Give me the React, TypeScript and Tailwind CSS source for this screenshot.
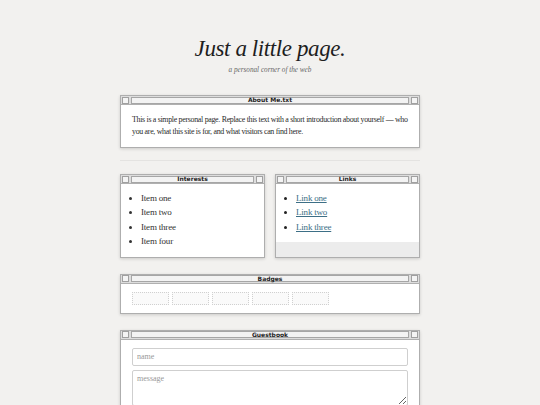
import type { ReactNode } from 'react'

const serif = { fontFamily: '"Liberation Serif", "DejaVu Serif", serif' }

function Win({ title, children, className = '' }: { title: string; children: ReactNode; className?: string }) {
  return (
    <div className={`flex flex-col border border-[#aeaeae] bg-[#ececec] shadow-[0_1px_3px_rgba(0,0,0,0.16)] ${className}`}>
      <div className="flex h-[9px] items-center gap-[2px] border-b border-[#b0b0b0] bg-[#dddddd] px-[1px]">
        <div className="h-[7px] w-[7px] border border-[#a0a0a0] bg-[#f4f4f4]" />
        <div className="flex h-[7px] flex-1 items-center justify-center border border-[#a6a6a6] bg-[#f3f3f3]">
          <span className="text-[6px] leading-none font-bold text-[#222]" style={{ fontFamily: '"DejaVu Sans", sans-serif' }}>
            {title}
          </span>
        </div>
        <div className="h-[7px] w-[7px] border border-[#a0a0a0] bg-[#f4f4f4]" />
      </div>
      <div className="bg-white">{children}</div>
    </div>
  )
}

export default function App() {
  return (
    <div className="min-h-[405px] bg-[#f2f1ef] text-[#222]" style={serif}>
      <div className="mx-auto w-[300px] pt-[35px]">
        <header className="text-center">
          <h1 className="text-[23px] leading-[28px] tracking-[-0.4px] italic text-[#1e1e1e]">Just a little page.</h1>
          <p className="mt-[2px] text-[7.2px] leading-[10px] italic text-[#666]">a personal corner of the web</p>
        </header>

        <Win title="About Me.txt" className="mt-[20px]">
          <p className="px-[11px] pt-[9px] pb-[9px] text-[7.9px] leading-[12px] tracking-[-0.3px] text-[#2a2a2a]">
            This is a simple personal page. Replace this text with a short introduction about yourself — who you are, what this site is for, and what visitors can find here.
          </p>
        </Win>

        <div className="mt-[12px] h-px bg-[#e4e3e1]" />

        <div className="mt-[13px] grid grid-cols-2 gap-[10px]">
          <Win title="Interests">
            <ul className="list-disc pl-[20px] pt-[7px] pb-[8px] text-[9px] leading-[14.4px] tracking-[-0.2px] text-[#333]">
              <li>Item one</li>
              <li>Item two</li>
              <li>Item three</li>
              <li>Item four</li>
            </ul>
          </Win>
          <Win title="Links">
            <ul className="list-disc pl-[20px] pt-[7px] pb-[8px] text-[9px] leading-[14.4px] tracking-[-0.2px]">
              <li><a href="#" className="text-[#3d6f86] underline">Link one</a></li>
              <li><a href="#" className="text-[#3d6f86] underline">Link two</a></li>
              <li><a href="#" className="text-[#3d6f86] underline">Link three</a></li>
            </ul>
          </Win>
        </div>

        <Win title="Badges" className="mt-[16px]">
          <div className="flex gap-[3px] px-[11px] pt-[8px] pb-[8px]">
            {[0, 1, 2, 3, 4].map((i) => (
              <div key={i} className="h-[13px] w-[37px] border border-dotted border-[#d0d0d0] bg-[#fafafa]" />
            ))}
          </div>
        </Win>

        <Win title="Guestbook" className="mt-[16px]">
          <div className="flex flex-col gap-[4px] px-[11px] pt-[8px] pb-[8px]">
            <input
              placeholder="name"
              className="h-[18px] w-full rounded-[2px] border border-[#cfcfcf] px-[4px] text-[8px] text-[#333] placeholder:text-[#999] outline-none"
              style={serif}
            />
            <textarea
              placeholder="message"
              className="h-[36px] w-full resize-y rounded-[2px] border border-[#cfcfcf] px-[4px] py-[2px] text-[8px] text-[#333] placeholder:text-[#999] outline-none"
              style={serif}
            />
          </div>
        </Win>
      </div>
    </div>
  )
}
